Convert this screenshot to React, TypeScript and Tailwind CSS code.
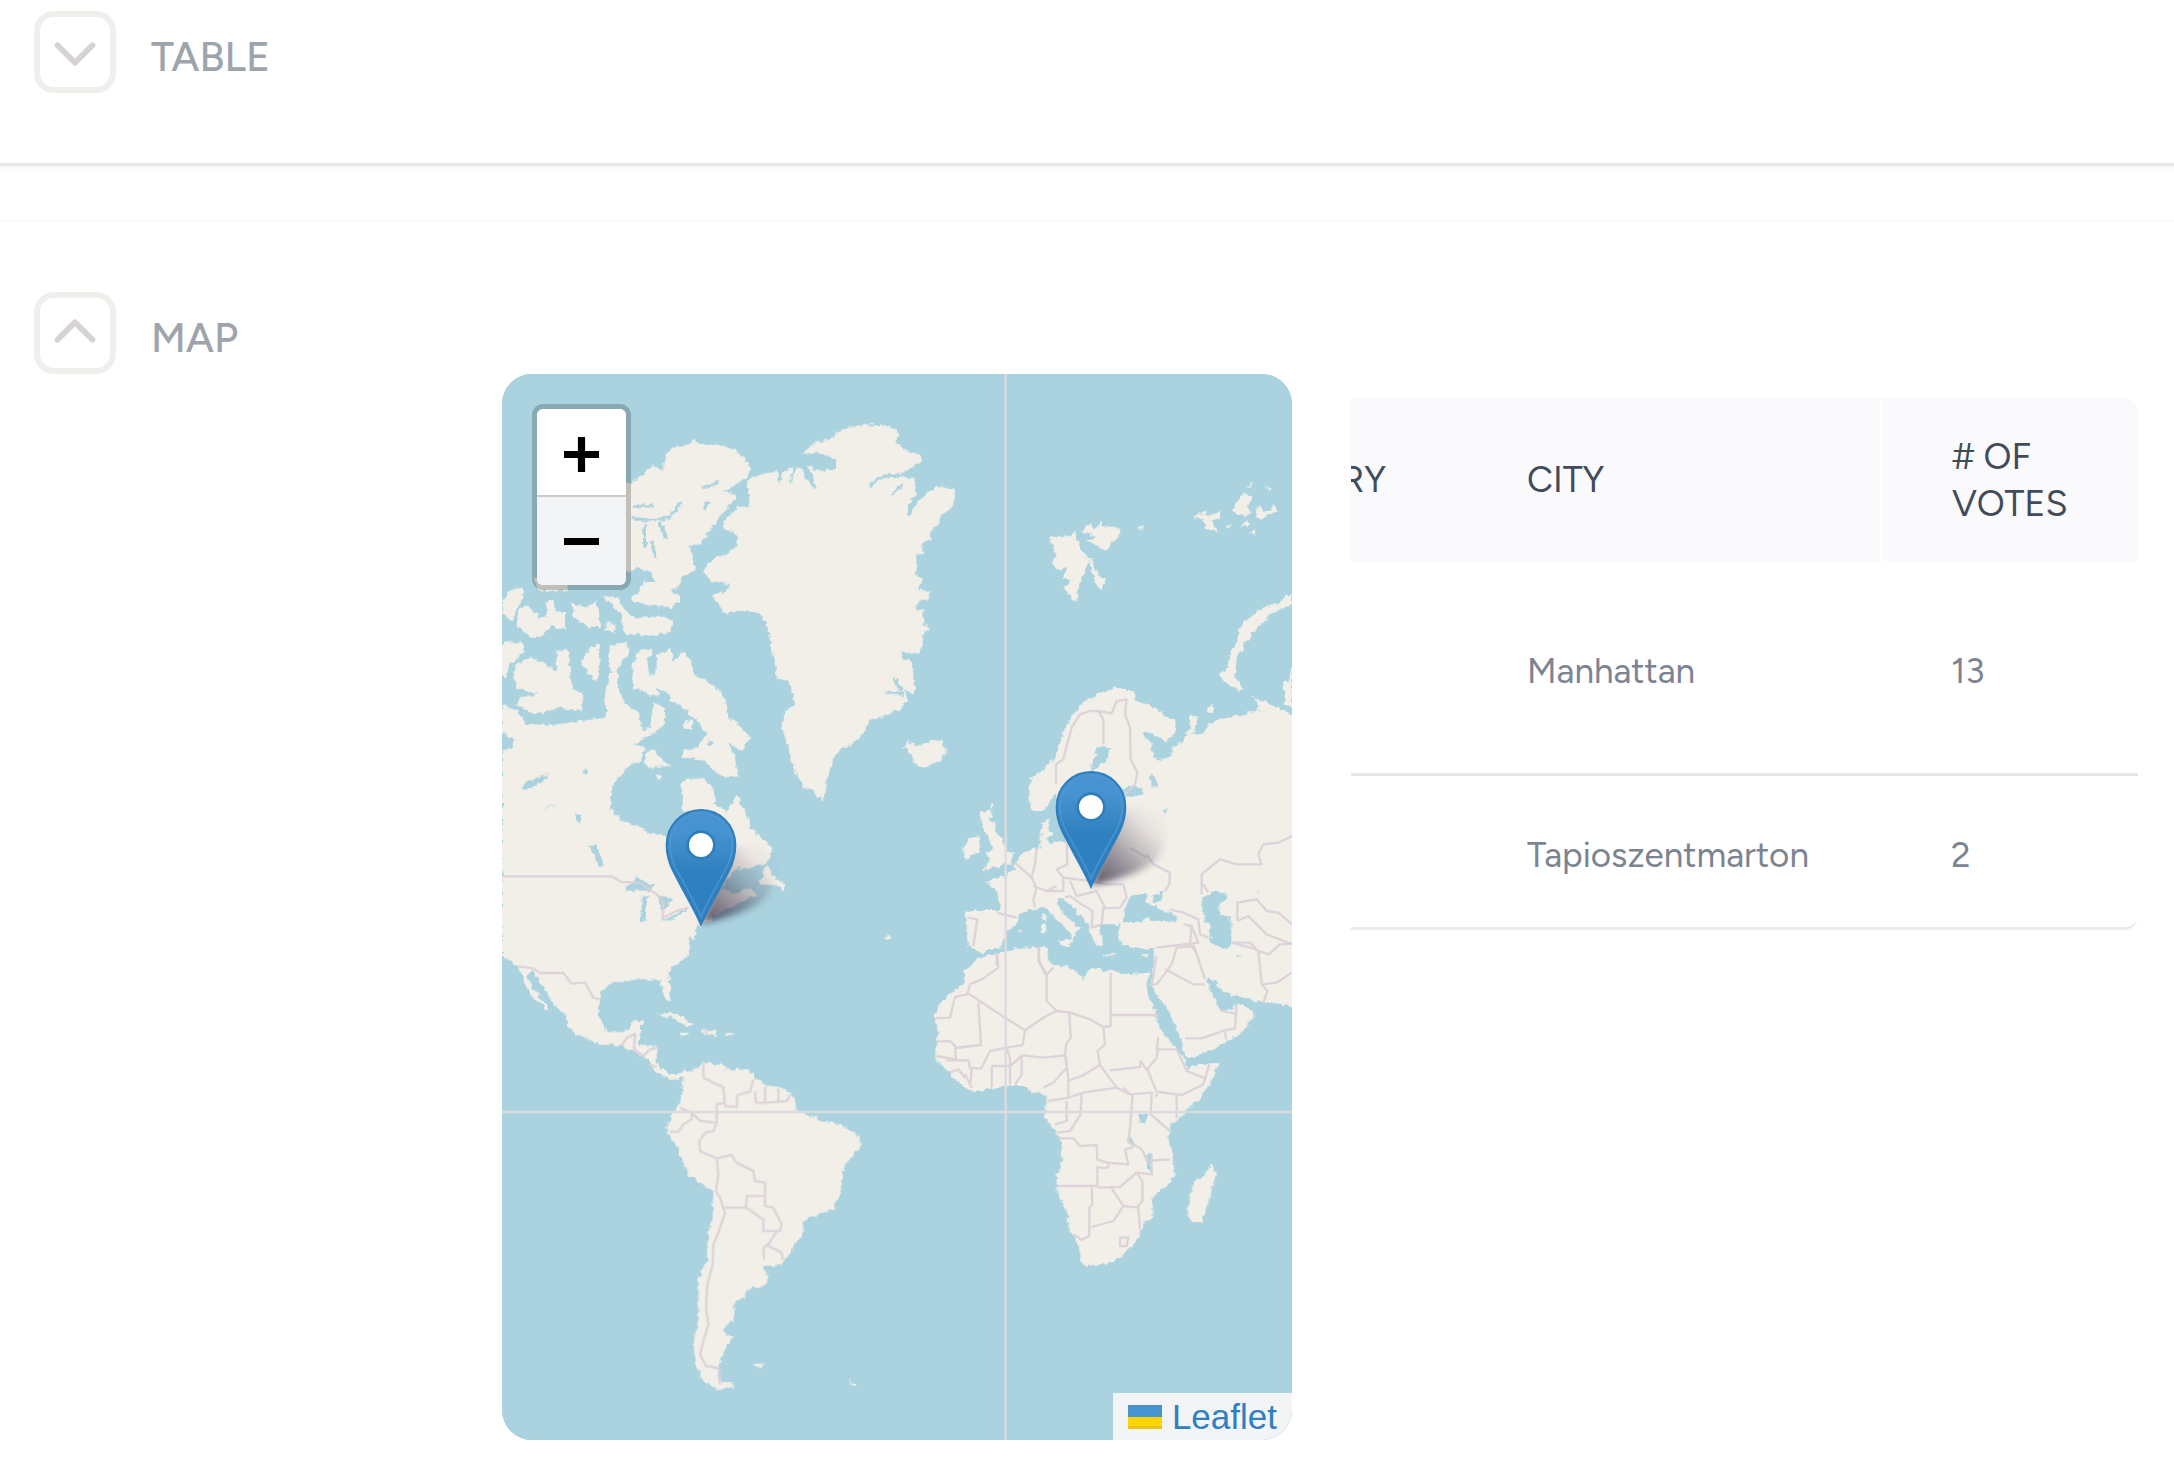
import { useState } from "react";
import { ChevronDown, ChevronUp } from "lucide-react";

interface VoteRow {
  country: string;
  city: string;
  votes: number;
}

const rows: VoteRow[] = [
  { country: "", city: "Manhattan", votes: 13 },
  { country: "", city: "Tapioszentmarton", votes: 2 },
];

// Land polygons, grouped by region. Each region has its own origin on the map.
const northAmerica = [
  // Greenland
  "M780 350 830 335 862 328 868 372 878 330 905 318 900 372 915 325 932 320 960 372 985 388 965 340 948 310 985 330 1040 325 1040 295 990 275 935 282 955 262 985 240 1020 235 1050 210 1090 195 1130 190 1170 188 1220 205 1228 225 1215 240 1250 270 1290 280 1297 295 1275 315 1240 335 1205 342 1250 350 1280 350 1275 400 1255 440 1252 465 1270 440 1285 420 1310 400 1340 375 1390 380 1398 405 1385 440 1350 465 1345 495 1325 505 1322 535 1300 545 1300 575 1280 580 1278 640 1300 655 1285 685 1318 690 1315 710 1290 720 1275 740 1300 750 1300 790 1325 800 1300 815 1300 835 1290 880 1260 880 1235 870 1235 890 1265 900 1270 940 1272 1000 1240 985 1255 1020 1230 1045 1190 1060 1140 1080 1125 1110 1090 1150 1050 1165 1030 1190 1015 1245 1005 1300 1000 1315 985 1310 970 1285 945 1280 925 1255 905 1200 895 1165 885 1130 875 1090 885 1050 910 1035 910 1000 895 960 860 950 855 900 840 830 825 780 800 755 770 745 700 755 685 730 665 705 720 685 720 670 665 665 640 630 650 610 685 585 735 565 745 530 730 510 705 505 700 485 745 435 780 440 770 370Z",
  // Ellesmere
  "M400 370 422 365 460 340 490 315 520 325 520 295 545 260 580 255 610 240 650 252 690 250 740 270 760 285 782 320 770 350 730 375 700 390 740 400 735 415 705 450 680 480 660 510 640 530 630 550 595 555 610 590 615 625 575 650 565 680 540 690 570 705 570 725 545 740 500 735 430 725 425 700 450 690 460 655 500 670 490 640 440 620 400 640Z",
  // Parry and Queen Elizabeth islands
  "M36 720 60 690 100 675 100 710 80 740 70 780 36 760ZM85 750 110 730 150 770 180 765 190 790 150 830 120 830 80 790ZM170 720 190 712 195 750 225 755 225 800 195 805 170 770ZM245 725 290 740 320 720 330 800 300 800 250 770ZM335 705 385 710 400 740 430 770 520 765 550 780 545 810 500 825 420 820 400 810 395 760ZM350 785 375 790 378 815 350 810ZM130 650 230 665 235 690 150 690Z",
  // Victoria, Banks, Somerset
  "M75 910 120 890 150 900 200 930 200 870 235 865 240 930 245 980 280 1000 275 1050 200 1040 130 1060 85 1030 85 1010 145 1000 80 980 70 940ZM36 840 95 845 105 875 60 910 45 950 36 950ZM275 900 300 860 325 850 330 920 320 960 295 940ZM355 850 415 848 415 880 385 915 380 960 400 1020 420 1060 350 1080 345 1000 360 940Z",
  // Baffin
  "M430 900 450 865 490 865 472 900 480 945 500 930 500 880 540 865 550 900 580 870 605 905 615 940 650 960 690 990 710 1030 715 1070 745 1090 780 1130 755 1170 715 1145 735 1190 745 1250 700 1250 660 1220 640 1195 575 1190 580 1170 620 1160 650 1120 620 1080 570 1030 530 1015 480 1000 430 980 425 940ZM580 1080 610 1080 605 1105 585 1100ZM480 1160 505 1180 540 1215 480 1220 460 1200ZM500 1240 520 1245 505 1260Z",
];

const mainland = [
  "M36 70 80 90 110 130 200 130 270 120 350 110 350 80 380 60 400 60 425 80 440 90 460 150 480 140 490 70 525 80 525 130 480 165 430 190 465 200 455 240 420 250 385 290 365 320 360 380 395 415 450 440 495 460 530 465 570 460 600 400 570 385 580 350 570 300 640 290 670 320 675 370 710 390 740 345 770 400 780 440 830 485 850 510 840 535 810 555 740 565 720 580 700 620 730 640 780 620 800 640 760 660 720 680 680 700 640 730 620 740 610 780 595 765 600 800 590 830 550 855 535 880 540 920 545 965 525 955 510 900 480 895 440 895 370 905 335 925 328 970 330 1010 345 1045 380 1055 415 1045 425 1020 460 1020 450 1050 445 1090 500 1095 500 1150 515 1175 530 1190 490 1165 470 1135 440 1115 395 1095 335 1090 260 1060 235 1040 230 1005 190 970 165 925 125 870 110 885 135 930 160 960 180 995 150 970 120 940 85 860 36 820Z",
  "M830 545 850 585 885 610 885 630 850 612 810 610ZM495 1000 540 995 580 1010 615 1035 590 1038 560 1015 520 1005ZM635 1045 685 1048 680 1062 640 1060ZM570 1055 597 1056 595 1064 572 1064ZM705 1054 732 1056 730 1062 706 1062ZM1180 767 1200 765 1205 772 1185 774Z",
];

const northLakes =
  "M405 628 420 605 440 590 490 612 480 630 430 628ZM450 720 455 650 478 643 466 680 466 720ZM500 640 545 652 535 672 520 690 510 660ZM505 717 545 708 590 680 588 690 540 718ZM300 495 320 490 340 550 330 560ZM90 322 120 298 180 275 155 305 110 325ZM36 155 75 172 70 195 36 215ZM160 385 200 365 175 382ZM655 170 668 185 655 200ZM115 112 170 105 240 108 190 122ZM255 395 275 400 268 430ZM275 268 295 262 288 280ZM500 20 540 40 540 60 505 50Z";

const arctic =
  "M480 530 540 525 555 510 575 575 605 595 625 640 648 655 635 688 615 665 600 600 588 620 568 670 562 722 545 712 525 680 545 660 520 650 530 620 505 630 485 605 500 590ZM575 510 600 485 610 510 630 480 640 500 685 495 688 520 650 567 590 540 620 528ZM740 500 765 495 750 507ZM910 470 940 452 955 465 990 450 990 475 965 480 985 515 945 500 940 475ZM1025 450 1055 400 1085 405 1070 440 1085 460 1050 465ZM1060 380 1090 365 1085 375ZM1122 380 1145 378 1140 392ZM1095 460 1105 435 1125 450 1155 430 1160 450 1110 478ZM1045 500 1075 480 1080 492ZM1080 512 1098 508 1092 520ZM1005 495 1025 490 1010 502ZM1206 700 1185 705 1170 725 1110 745 1075 770 1050 800 1045 840 1025 870 1010 925 985 945 1025 980 1062 988 1035 945 1040 890 1065 845 1095 805 1150 755 1206 730ZM1206 910 1195 960 1180 965 1185 1030 1206 1040ZM948 1040 970 1032 972 1052 952 1056ZM1080 1003 1105 1015 1110 1030Z";

const eurasia = [
  "M1216 195 1165 170 1130 155 1100 145 1105 180 1060 190 1010 200 960 215 935 250 910 245 928 200 895 195 900 235 880 265 850 290 845 315 800 330 785 300 785 275 760 250 765 240 830 270 860 240 855 210 800 175 740 150 730 120 680 108 625 130 570 160 540 205 510 270 495 320 480 340 420 385 415 440 425 480 460 480 495 430 530 480 530 575 480 575 440 590 400 605 370 640 375 655 330 680 285 690 320 720 330 780 230 780 230 850 235 885 270 905 330 890 350 840 385 810 385 790 440 770 470 770 500 810 545 850 540 875 560 850 570 830 520 790 500 745 525 745 560 780 590 815 610 865 630 890 640 865 620 820 690 820 685 850 695 880 750 895 795 890 790 960 785 1000 800 1030 840 1090 860 1130 885 1215 910 1220 1000 1180 1060 1140 1095 1090 1070 1070 1045 1055 1020 1075 990 1075 960 1020 950 980 975 990 1000 1025 1060 1040 1120 1055 1190 1060 1216 1080Z",
  "M455 515 480 502 475 535 495 545 470 570 495 580 450 590ZM270 485 300 478 310 495 292 505 318 520 315 540 345 575 345 600 370 605 362 640 320 645 275 662 300 625 288 605 310 590 295 560 275 530ZM235 560 265 552 272 600 225 628 220 590ZM40 290 55 265 75 288 100 275 150 265 172 300 150 325 110 352 70 335 65 310ZM455 795 468 790 468 812 456 812ZM455 820 470 822 466 850 455 848ZM505 872 542 865 540 890 510 880ZM640 910 678 911 676 916 642 916ZM752 914 775 906 768 920ZM385 838 395 838 392 845ZM298 462 310 460 305 475Z",
];

const eurasiaWater =
  "M620 292 640 285 665 290 652 325 625 350 600 360 560 440 560 500 600 560 650 530 640 480 690 440 720 438 760 430 755 410 725 403 690 420 620 380 600 360ZM700 800 710 760 730 728 775 730 765 752 800 770 860 795 862 815 800 812 770 800 730 815 697 815ZM783 735 822 720 815 742 798 758ZM935 750 960 722 1010 722 1005 745 985 765 990 795 1022 800 1025 885 1000 890 960 875 962 830 940 790ZM785 365 805 405 785 408 780 385ZM815 475 832 470 828 485ZM1040 910 1052 910 1050 918ZM1098 723 1110 722 1106 730Z";

const africa =
  "M215 45 260 40 320 20 415 18 418 65 480 80 520 115 545 80 600 90 650 100 720 95 710 130 718 165 735 215 755 270 790 310 820 350 832 380 925 365 915 400 880 460 830 510 785 550 775 590 785 640 795 700 770 735 725 770 730 830 700 845 685 890 640 945 600 965 535 978 515 965 505 910 480 870 470 810 440 745 440 700 458 660 450 600 430 560 405 530 410 465 360 450 350 435 300 435 240 440 190 455 150 430 120 400 75 350 80 310 85 260 72 230 100 175 160 130 165 90ZM905 670 918 700 900 770 875 840 850 848 830 820 835 790 850 720 880 705Z";

const southAmerica =
  "M185 150 210 125 250 95 300 100 330 115 390 115 405 140 440 165 500 175 520 200 530 235 600 270 660 280 715 315 718 345 700 375 670 405 665 470 655 500 640 535 590 550 550 570 548 610 520 650 485 700 450 708 430 705 445 740 430 765 380 775 375 800 345 810 340 870 315 880 310 905 340 920 320 940 300 990 295 1020 300 1050 345 1065 290 1078 250 1050 225 1000 220 930 235 880 235 750 260 690 265 610 278 560 280 480 240 455 205 430 190 390 165 340 140 300 155 250 180 215 188 180ZM398 1000 435 996 415 1012ZM685 1045 710 1060 700 1068Z";

function WorldMap() {
  return (
    <svg viewBox="0 0 2370 3198" className="block h-full w-full" aria-hidden="true">
      <defs>
        <filter id="coast" x="-5%" y="-5%" width="110%" height="110%">
          <feTurbulence type="fractalNoise" baseFrequency="0.06" numOctaves="2" seed="4" result="noise" />
          <feDisplacementMap in="SourceGraphic" in2="noise" scale="20" xChannelSelector="R" yChannelSelector="G" />
        </filter>
      </defs>
      <rect width="2370" height="3198" fill="#aad3df" />

      <g fill="#f2efe9" filter="url(#coast)">
        <g transform="translate(-36 -39)">
          {northAmerica.map((d) => <path key={d} d={d} />)}
          <path
            d="M1140 375 1165 352 1205 342 1250 345M1205 402 1240 370M1255 465 1275 420M425 472 490 478 540 468 572 425M425 435H492M640 380 685 362M462 490 465 560M510 485 528 535M485 540 495 590M640 440 660 420M1235 990 1210 950M1190 995 1240 1000"
            fill="none"
            stroke="#aad3df"
            strokeWidth="9"
          />
        </g>
        <g transform="translate(-36 921)">
          {mainland.map((d) => <path key={d} d={d} />)}
          <path d="M515 1165 530 1185 560 1190 580 1175 605 1195" fill="none" stroke="#f2efe9" strokeWidth="14" />
          <path d={northLakes} fill="#aad3df" />
        </g>
        <path transform="translate(354 1971)" d={southAmerica} />
        <path transform="translate(1164 -39)" d={arctic} />
        <g transform="translate(1164 831)">
          {eurasia.map((d) => <path key={d} d={d} />)}
          <path d={eurasiaWater} fill="#aad3df" />
        </g>
        <path transform="translate(1224 1701)" d={africa} />
        <path
          transform="translate(1224 1701)"
          d="M683 522 715 518 708 545 690 545ZM655 580 670 615 664 620 652 595ZM708 640 722 640 726 700 712 680ZM735 455 742 455 740 475Z"
          fill="#aad3df"
        />
      </g>

      {/* country borders */}
      <g fill="none" stroke="#dacfd6" strokeWidth="7" strokeLinejoin="round" strokeOpacity="0.9">
        <path
          transform="translate(-36 921)"
          d="M36 586H365L395 603 450 605 500 640 520 660 518 712 555 692 595 680M85 856 130 862 150 876 220 876 245 908 285 905 310 950 328 955M395 1092 412 1070 435 1058 432 1105 460 1125 480 1105 505 1100M478 1150 500 1158M650 1045V1060"
        />
        <path
          transform="translate(354 1971)"
          d="M250 95V140L280 155 310 168 315 225 350 228 352 192 390 182 400 145M405 180 408 215 440 215 500 210 512 190M435 165V215M475 172V212M315 215 290 220 290 275 240 270 215 245 180 230M290 275 280 300 255 305 238 330 240 360 290 382 335 372 350 395 400 420 405 450 435 455 435 495 380 495 378 530 315 530M150 302 175 302 190 280 215 265V245M290 382 295 430 288 480 300 500 315 545 295 605 280 640 278 700 262 760 258 830 265 880 250 930 240 970 258 1005 297 1012 300 1060M378 530 430 565 430 600 480 600 485 580 460 530 435 525V495M470 602 445 640 430 650 432 685M445 645 485 665 488 688"
        />
        <path
          transform="translate(1224 1701)"
          d="M262 40 265 80 220 112 180 130 172 160 135 168 120 230 72 232M172 155 285 230 345 268 400 230 440 210 410 180 410 100 385 60 388 18M410 100 430 80M440 210 482 215 540 235 580 258 602 255 602 95M602 222H745M205 185 213 312 140 320 120 300 78 302M213 312 135 322 138 355 80 345M345 268 338 312 290 320 240 330 213 383 180 380 175 358 110 358M290 320 300 350 300 430M245 375 300 375 335 345V400L315 430M245 375V440M338 343 400 350 465 343 468 310 482 290 478 215M465 345 470 380 430 425 400 440M580 258 585 310 563 330 570 372 515 405 475 418 468 345M570 372 620 440 660 460 640 440M600 388 690 378 692 360 712 390M745 320 740 350 712 385 740 452 815 462 880 430 898 370M745 290 740 325 800 325 830 390 885 412M475 418 475 470 415 480M475 470 520 455 620 440M515 455 512 520 480 570 440 575M470 480 470 540 435 550M660 460 725 455 722 520 780 570M800 462V530M668 460 660 560 655 600 695 625 712 660 780 655M445 592 490 592 510 615 560 612 562 655 590 665 655 670 645 625 670 620M562 675V735L440 735M595 665V680H562M562 740 630 738 680 695 725 700 725 640M680 695 697 720 697 780 680 800M545 740 547 790 538 800 538 885 515 897 490 880M605 742 640 795 685 800 690 865M640 795 610 840 545 858M630 890 655 890 650 915 630 915ZM185 380 182 425M120 395 145 385 165 410M185 440 165 400M740 130 725 130 740 45M740 130 785 70 800 20 850 15M765 85 850 130 885 130M850 10 862 45 885 115M825 292 875 292 945 268 975 262 980 190M930 208 975 218M945 268 948 295M1045 30 1055 130 1072 150 1060 185M1055 130 1100 125 1145 95M1045 30 1075 40 1110 10 1145 8M965 5 1040 25"
        />
        <path
          transform="translate(1164 831)"
          d="M498 400 498 340 520 325 530 285 545 230 570 190 600 180 625 180 665 187 680 150 710 145 705 190 720 230 722 325 742 365 735 400 700 435M625 180 640 205V280M530 575 532 640 500 655 520 680 600 690 650 700 700 700 710 740 690 770 640 772 635 820 605 830 608 780 575 760 540 735 525 740M440 590 435 640 425 680 375 635M425 680 440 710 430 745 435 770M430 705 470 720 520 720 520 680M470 720 500 705M540 690 560 735 620 720 645 770M235 800 262 805 250 885M320 785 380 800M770 610 790 640 840 665 838 700 825 720M720 590 770 620M840 775 880 785 925 805 930 850 955 860M880 820 905 825 925 875 800 890M905 825 900 880 920 905M935 730 935 670 990 625 1040 640 1115 640 1105 610 1120 580 1165 575 1206 555M1042 810V755L1100 745 1130 780 1165 785 1206 820M1042 810 1075 795 1130 850 1206 880M1025 875 1080 875 1105 900M940 700 955 725M445 885 448 930 465 970M320 905V945"
        />
      </g>

      {/* map tile seams */}
      <path d="M1511 0V3198M0 2214H2370" stroke="#dcdcde" strokeWidth="7" />
    </svg>
  );
}

function MapPin({ label, left, top }: { label: string; left: string; top: string }) {
  return (
    <button
      type="button"
      aria-label={label}
      className="absolute h-[118px] w-[72px] -translate-x-1/2 -translate-y-full cursor-pointer"
      style={{ left, top }}
    >
      <svg viewBox="0 0 216 354" className="block h-full w-full overflow-visible" aria-hidden="true">
        <defs>
          <linearGradient id="pin-fill" x1="0" y1="0" x2="0" y2="1">
            <stop offset="0.2" stopColor="#4792d0" />
            <stop offset="0.55" stopColor="#2e80c0" />
          </linearGradient>
          <linearGradient id="pin-shadow" x1="0" y1="1" x2="1" y2="0">
            <stop offset="0" stopColor="#1e1c35" stopOpacity="0.75" />
            <stop offset="0.4" stopColor="#2b2940" stopOpacity="0.4" />
            <stop offset="0.8" stopColor="#6b5065" stopOpacity="0.04" />
          </linearGradient>
          <filter id="pin-blur" x="-30%" y="-30%" width="160%" height="160%">
            <feGaussianBlur stdDeviation="10" />
          </filter>
        </defs>
        <path d="M110 346 190 130Q270 90 320 150 355 225 285 285 220 325 110 346Z" fill="url(#pin-shadow)" filter="url(#pin-blur)" />
        <path
          d="M108 350C92 312 62 262 24 188 12 164 5 140 5 112 5 50 52 6 108 6S211 50 211 112C211 140 204 164 192 188 154 262 124 312 108 350Z"
          fill="url(#pin-fill)"
          stroke="#2e7ebc"
          strokeWidth="6"
        />
        <path
          d="M108 326C92 288 68 246 33 182 21 158 15 138 15 112 15 58 56 16 108 16S201 58 201 112C201 138 195 158 183 182 148 246 124 288 108 326Z"
          fill="none"
          stroke="#4f98d3"
          strokeWidth="5"
          strokeOpacity="0.75"
        />
        <circle cx="108" cy="111" r="40" fill="#fff" stroke="#2e7ebc" strokeWidth="8" />
      </svg>
    </button>
  );
}

function LeafletMap() {
  return (
    <div className="relative aspect-[790/1066] overflow-hidden rounded-[30px] bg-[#aad3df]">
      <WorldMap />
      <MapPin label="Manhattan" left="25.25%" top="51.75%" />
      <MapPin label="Tapioszentmarton" left="74.5%" top="48.2%" />

      <div className="absolute left-[30px] top-[30px] w-[99px] overflow-hidden rounded-[11px] border-[5px] border-black/20 bg-clip-padding">
        <button type="button" aria-label="Zoom in" className="flex h-[88px] w-full items-center justify-center border-b-2 border-[#ccc] bg-white pt-1">
          <svg viewBox="0 0 34 34" className="size-[35px]" aria-hidden="true">
            <path d="M0 17H34M17 0V34" stroke="#000" strokeWidth="7" />
          </svg>
        </button>
        <button type="button" aria-label="Zoom out" className="flex h-[88px] w-full items-center justify-center bg-[#f3f4f6]">
          <svg viewBox="0 0 34 34" className="size-[35px]" aria-hidden="true">
            <path d="M0 17H34" stroke="#000" strokeWidth="7" />
          </svg>
        </button>
      </div>

      <div className="absolute bottom-0 right-0 flex h-[47px] items-center bg-[#f3f4f6] px-[15px]">
        <a href="#leaflet" className="flex items-center gap-2.5 font-['Liberation_Sans',sans-serif] text-[35px] leading-none text-[#2e80c0]">
          <svg viewBox="0 0 34 24" className="h-6 w-[34px]" aria-hidden="true">
            <path d="M0 0H34V12H0Z" fill="#4792d0" />
            <path d="M0 12H34V24H0Z" fill="#ffd500" />
            <path d="M0 21H34V24H0Z" fill="#e6c41a" />
          </svg>
          Leaflet
        </a>
      </div>
    </div>
  );
}

function VotesTable() {
  return (
    <div className="flex justify-end overflow-hidden rounded-r-[14px] border-b-3 border-[#ececee]">
      <table className="w-[1034px] shrink-0 table-fixed border-collapse text-left text-[#7b8490]">
        <colgroup>
          <col className="w-[352px]" />
          <col className="w-[425px]" />
          <col />
        </colgroup>
        <thead className="bg-[#fafafc] text-[36px] leading-[47px] text-[#414b5a]">
          <tr className="h-[163px]">
            <th scope="col" className="pr-[70px] text-right font-normal">COUNTRY</th>
            <th scope="col" className="border-r-2 border-white/80 pl-[71px] font-normal">CITY</th>
            <th scope="col" className="pl-[70px] pr-6 font-normal"># OF VOTES</th>
          </tr>
        </thead>
        <tbody className="text-[35px]">
          {rows.map((row, i) => (
            <tr key={row.city} className={i === 0 ? "h-[213px] border-b-3 border-[#e5e6e8]" : "h-[153px]"}>
              <td>{row.country}</td>
              <td className="pt-2 pl-[71px]">{row.city}</td>
              <td className="pt-2 pl-[70px]">{row.votes}</td>
            </tr>
          ))}
        </tbody>
      </table>
    </div>
  );
}

function SectionToggle({ title, open, onToggle }: { title: string; open: boolean; onToggle: () => void }) {
  const Icon = open ? ChevronUp : ChevronDown;

  return (
    <button type="button" aria-expanded={open} onClick={onToggle} className="flex items-center gap-[35px] pl-[34px]">
      <span className={`flex size-[82px] items-center justify-center rounded-[20px] border-[6px] border-[#f0efec] ${open ? "pb-1" : "pt-1"}`}>
        <Icon className="size-[70px] shrink-0 text-[#d6d2d5]" strokeWidth={2} />
      </span>
      <span className="pt-2 text-[41px] leading-none font-medium text-[#9ea4ab]">{title}</span>
    </button>
  );
}

export default function App() {
  const [tableOpen, setTableOpen] = useState(false);
  const [mapOpen, setMapOpen] = useState(true);

  return (
    <main className="min-h-screen overflow-hidden bg-white font-['Figtree',Lato,sans-serif]">
      <section className="border-b-3 border-[#e6e9e9] pt-[11px] pb-[70px] shadow-[0_3px_4px_rgba(0,0,0,0.04)]">
        <SectionToggle title="TABLE" open={tableOpen} onToggle={() => setTableOpen(!tableOpen)} />
      </section>

      <section className="mt-[53px] border-t-3 border-[#fafafb] pt-[70px]">
        <SectionToggle title="MAP" open={mapOpen} onToggle={() => setMapOpen(!mapOpen)} />
        {mapOpen && (
          <div className="grid grid-cols-[502fr_790fr_882fr] items-start">
            <div className="col-start-2">
              <LeafletMap />
            </div>
            <div className="min-w-0 pt-6 pr-9 pl-[59px]">
              <VotesTable />
            </div>
          </div>
        )}
      </section>
    </main>
  );
}
